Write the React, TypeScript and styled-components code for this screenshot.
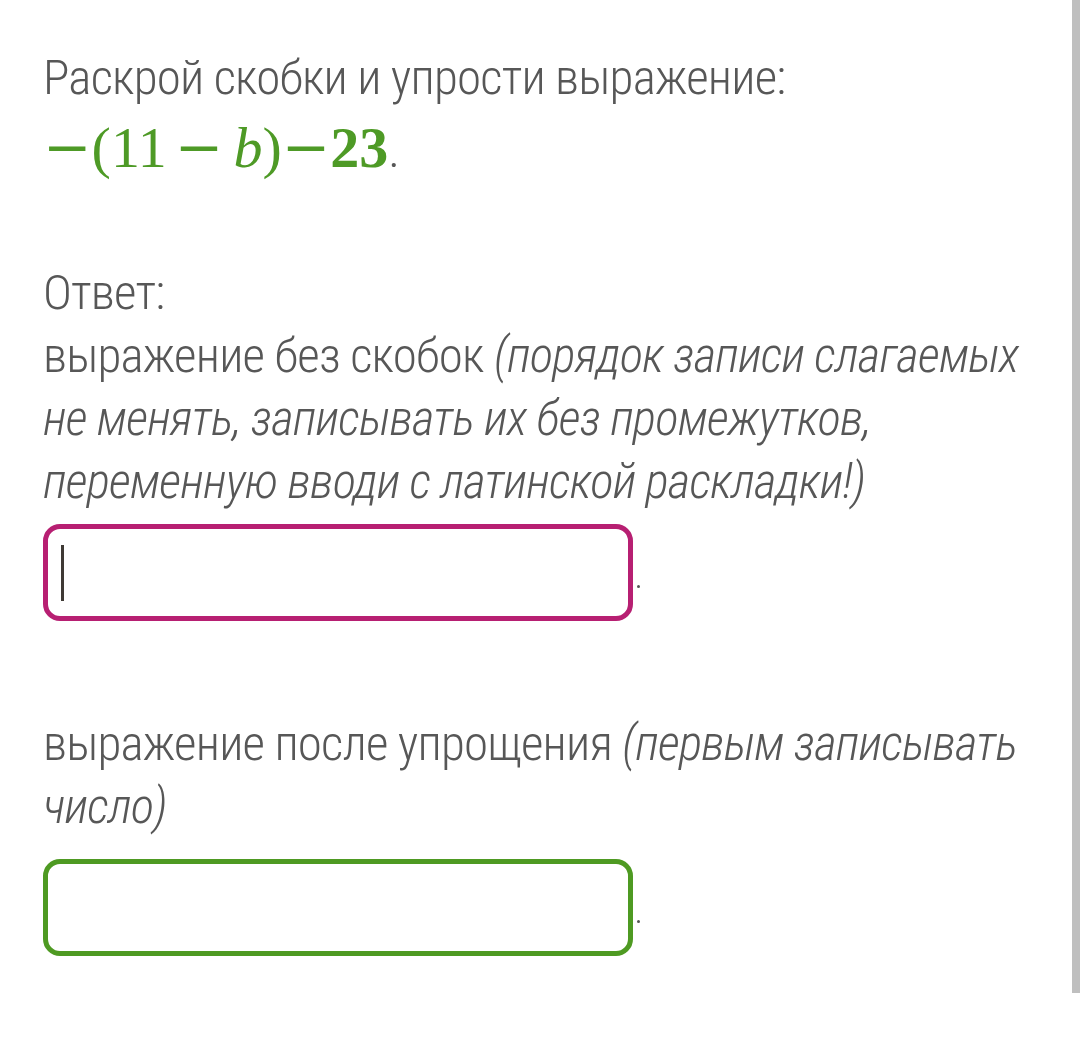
import styled, { createGlobalStyle } from "styled-components";

const GlobalStyle = createGlobalStyle`
  html, body {
    margin: 0;
    padding: 0;
    background: #ffffff;
  }
  body {
    font-family: Roboto, "Noto Sans", sans-serif;
    color: #575757;
    overflow: hidden;
  }
`;

const Page = styled.main`
  width: 1080px;
  height: 1048px;
  box-sizing: border-box;
  padding: 46px 47px 0 43px;
`;

const Para = styled.p`
  margin: 0;
  font-size: 49px;
  font-weight: 300;
  line-height: 63px;
  font-stretch: condensed;
  letter-spacing: -0.8px;
`;

const Hint = styled.em`
  font-style: italic;
`;

const MathLine = styled.div`
  display: flex;
  align-items: baseline;
  height: 86px;
  margin-bottom: 66px;
`;

const Formula = styled.span`
  font-family: "Liberation Serif", "DejaVu Serif", serif;
  font-size: 58px;
  color: #4e9a26;
  line-height: 76px;
`;

const Minus = styled.span<{ $l?: number; $r?: number }>`
  font-family: "DejaVu Serif", serif;
  font-weight: 400;
  margin: 0 ${(p) => p.$r ?? 0}px 0 ${(p) => p.$l ?? 0}px;
`;

const Var = styled.i`
  font-style: italic;
`;

const Strong = styled.b`
  font-weight: 700;
`;

const Dot = styled.span`
  font-size: 49px;
  font-weight: 300;
  font-stretch: condensed;
  color: #575757;
`;

const FieldRow = styled.div<{ $gap: number }>`
  display: flex;
  align-items: flex-end;
  margin-top: ${(p) => p.$gap}px;
`;

const Field = styled.div<{ $color: string }>`
  width: 590px;
  height: 97px;
  box-sizing: border-box;
  border: 5px solid ${(p) => p.$color};
  border-radius: 17px;
  display: flex;
  align-items: center;
  padding-left: 13px;
`;

const Caret = styled.span`
  display: block;
  width: 3px;
  height: 56px;
  background: #3f3a35;
`;

const FieldDot = styled.span`
  width: 3px;
  height: 3px;
  border-radius: 50%;
  background: #555;
  margin: 0 0 33px 4px;
`;

const Scrollbar = styled.div`
  position: fixed;
  top: 0;
  right: 0;
  width: 8px;
  height: 993px;
  background: #bfbfbf;
`;

export default function App() {
  return (
    <>
      <GlobalStyle />
      <Page>
        <Para>Раскрой скобки и упрости выражение:</Para>
        <MathLine>
          <Formula>
            <Minus>−</Minus>(11<Minus $l={8} $r={10}>−</Minus>
            <Var>b</Var>)<Minus>−</Minus>
            <Strong>23</Strong>
          </Formula>
          <Dot>.</Dot>
        </MathLine>
        <Para>Ответ:</Para>
        <Para>
          выражение без скобок{" "}
          <Hint>
            (порядок записи слагаемых не менять, записывать их без промежутков,
            переменную вводи с латинской раскладки!)
          </Hint>
        </Para>
        <FieldRow $gap={11}>
          <Field $color="#b71f72">
            <Caret />
          </Field>
          <FieldDot />
        </FieldRow>
        <FieldRow $gap={91}>
          <Para>
            выражение после упрощения <Hint>(первым записывать число)</Hint>
          </Para>
        </FieldRow>
        <FieldRow $gap={21}>
          <Field $color="#4e9a22" />
          <FieldDot />
        </FieldRow>
      </Page>
      <Scrollbar />
    </>
  );
}
